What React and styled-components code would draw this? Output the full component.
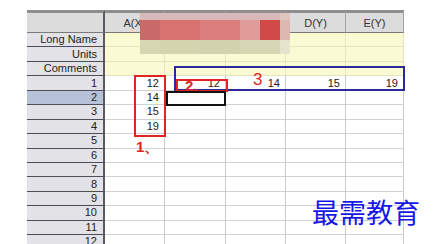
import React from "react";
import styled, { createGlobalStyle } from "styled-components";

const Global = createGlobalStyle`
  html, body { margin: 0; padding: 0; background: #fff; }
  #root { width: 433px; height: 244px; }
`;

const Page = styled.div`
  position: relative;
  width: 433px;
  height: 244px;
  overflow: hidden;
  background: #fff;
  padding: 10px 0 0 27px;
  box-sizing: border-box;
  font-family: "Liberation Sans", Arial, sans-serif;
`;

const Sheet = styled.div`
  display: grid;
  grid-template-columns: 78px 60px 61px 60px 60px 58px;
  grid-template-rows: 23px repeat(15, 14.45px);
  width: 377px;
`;

const HeadCell = styled.div`
  box-sizing: border-box;
  background: #dcdcdc;
  border-top: 3px solid #8e8e8e;
  border-bottom: 1px solid #7a7a7a;
  border-right: ${(p) => (p.$corner ? "2px solid #5a5a64" : "1px solid #a4a4a4")};
  display: flex;
  align-items: center;
  justify-content: center;
  font-size: 11px;
  color: #333;
  padding-top: 1px;
`;

const RowHead = styled.div`
  box-sizing: border-box;
  background: ${(p) => (p.$sel ? "#b7c2d9" : "#e3e3e7")};
  border-bottom: 1px solid #4e4e5a;
  border-right: 2px solid #5a5a64;
  display: flex;
  align-items: center;
  justify-content: flex-end;
  padding-right: 6px;
  font-size: 11px;
  color: #222;
  line-height: 1;
`;

const Cell = styled.div`
  box-sizing: border-box;
  background: ${(p) => (p.$meta ? "#fbfbd3" : "#fff")};
  border-bottom: 1px solid ${(p) => (p.$meta ? "#e4e4bf" : "#d2d2d2")};
  border-right: 1px solid ${(p) => (p.$meta ? "#e4e4c4" : "#cbcbcb")};
  display: flex;
  align-items: center;
  justify-content: flex-end;
  padding-right: 5px;
  font-size: 11px;
  color: #222;
  line-height: 1;
`;

const Box = styled.div`
  position: absolute;
  box-sizing: border-box;
  border: 2px solid ${(p) => p.$c};
`;

const Mark = styled.div`
  position: absolute;
  color: #e02424;
  font-family: "Liberation Sans", Arial, sans-serif;
  font-size: ${(p) => p.$size || 15}px;
  font-weight: ${(p) => (p.$bold ? 700 : 400)};
  line-height: 1;
`;

const Blur = styled.div`
  position: absolute;
  left: 140px;
  top: 13px;
  width: 150px;
  height: 41px;
  display: grid;
  grid-template-rows: 7px 20px 14px;
  filter: blur(0.6px);
`;

const BlurRow = styled.div`
  display: flex;
`;

const Patch = styled.div`
  width: ${(p) => p.$w}px;
  background: ${(p) => p.$c};
`;

const Logo = styled.div`
  position: absolute;
  left: 312px;
  top: 196px;
  font-family: "Noto Sans CJK SC", sans-serif;
  font-size: 27px;
  line-height: 1.2;
  color: #1717e8;
  white-space: nowrap;
`;

const cols = ["A(X)", "B(Y)", "C(Y)", "D(Y)", "E(Y)"];
const rows = [
  { label: "Long Name", meta: true },
  { label: "Units", meta: true },
  { label: "Comments", meta: true },
  { label: "1", vals: ["12", "12", "14", "15", "19"] },
  { label: "2", vals: ["14"], sel: true },
  { label: "3", vals: ["15"] },
  { label: "4", vals: ["19"] },
  { label: "5" },
  { label: "6" },
  { label: "7" },
  { label: "8" },
  { label: "9" },
  { label: "10" },
  { label: "11" },
  { label: "12" },
];

const patchRows = [
  [["#d8b8b8", 140], ["#e0c4c0", 10]],
  [["#c96a68", 20], ["#d87270", 40], ["#da7f7b", 40], ["#e09c99", 20], ["#d24a48", 20], ["#dcb8b0", 10]],
  [["#d7d6b2", 20], ["#d4d4ae", 40], ["#d3d3b0", 40], ["#d6d6b4", 40], ["#e6e4cc", 10]],
];

const boxes = [
  { c: "#2a2a9e", x: 174, y: 66, w: 231, h: 25 },
  { c: "#e02424", x: 134, y: 75, w: 32, h: 62 },
  { c: "#e02424", x: 176, y: 79, w: 52, h: 13 },
  { c: "#111", x: 166, y: 91, w: 60, h: 15 },
];

const marks = [
  { t: "2.", x: 185, y: 78, s: 15, b: true },
  { t: "3", x: 253, y: 71, s: 17, b: false },
  { t: "1、", x: 136, y: 139, s: 15, b: true },
];

export default function App() {
  return (
    <>
      <Global />
      <Page>
        <Sheet>
          <HeadCell $corner />
          {cols.map((c) => (
            <HeadCell key={c}>{c}</HeadCell>
          ))}
          {rows.map((r) => (
            <React.Fragment key={r.label}>
              <RowHead $sel={r.sel}>{r.label}</RowHead>
              {cols.map((c, i) => (
                <Cell key={c} $meta={r.meta}>
                  {r.vals && r.vals[i]}
                </Cell>
              ))}
            </React.Fragment>
          ))}
        </Sheet>

        <Blur>
          {patchRows.map((row, ri) => (
            <BlurRow key={ri}>
              {row.map(([c, w], i) => (
                <Patch key={i} $c={c} $w={w} />
              ))}
            </BlurRow>
          ))}
        </Blur>

        {boxes.map((b, i) => (
          <Box key={i} $c={b.c} style={{ left: b.x, top: b.y, width: b.w, height: b.h }} />
        ))}
        {marks.map((m) => (
          <Mark key={m.t} $size={m.s} $bold={m.b} style={{ left: m.x, top: m.y }}>
            {m.t}
          </Mark>
        ))}

        <Logo>最需教育</Logo>
      </Page>
    </>
  );
}
